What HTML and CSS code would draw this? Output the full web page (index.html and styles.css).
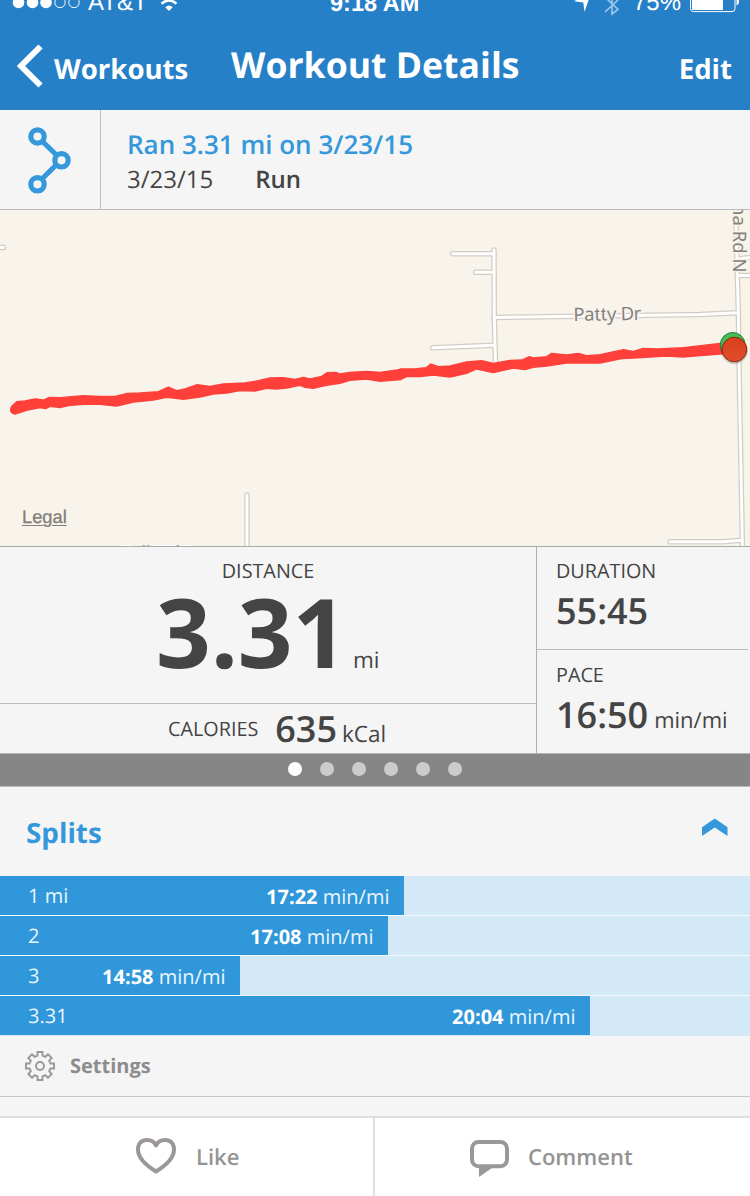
FILE: index.html
```html
<!DOCTYPE html>
<html lang="en">
<head>
<meta charset="utf-8">
<title>Workout Details</title>
<link rel="stylesheet" href="styles.css">
</head>
<body>
<div class="app">
  <header class="header">
    <div class="status">
      <div class="status-left">
        <svg class="signal" width="68" height="9" viewBox="0 0 68 9">
          <g fill="#fff"><circle cx="6.500" cy="2.500" r="5.800"/><circle cx="20.500" cy="2.500" r="5.800"/><circle cx="34" cy="2.500" r="5.800"/></g>
          <g fill="none" stroke="#fff" stroke-width="1"><circle cx="48" cy="2.500" r="5.200"/><circle cx="62" cy="2.500" r="5.200"/></g>
        </svg>
        <span class="carrier">AT&amp;T</span>
        <svg class="wifi" width="18" height="12" viewBox="0 0 18 12">
          <path d="M9 11 L5.300 7.200 Q9 3.800 12.700 7.200 Z" fill="#fff"/>
          <path d="M1.500 3.800 Q9 -2.800 16.500 3.800" fill="none" stroke="#fff" stroke-width="2.600"/>
        </svg>
      </div>
      <span class="clock">9:18 AM</span>
      <div class="status-right">
        <svg class="locate" width="17" height="12" viewBox="0 0 17 12"><path d="M0 1.200 L17 -7 L10.500 12 L9.300 2.400 Z" fill="#fff"/></svg>
        <svg class="bluetooth" width="16" height="16" viewBox="0 0 16 16"><path d="M1 -3 L14 9.500 L8 14 V-8 M1 12 L14 0" fill="none" stroke="#9cc5ea" stroke-width="1.700"/></svg>
        <span class="percent">75%</span>
        <svg class="battery" width="50" height="13" viewBox="0 0 50 13">
          <rect x=".5" y="-10" width="44.500" height="21.600" rx="3" fill="none" stroke="#fff"/>
          <rect x="2" y="-8" width="31" height="18" rx="1" fill="#fff"/>
          <path d="M46.500 -3 Q49 -2 49 1 Q49 4.500 46.500 5.500 Z" fill="#fff"/>
        </svg>
      </div>
    </div>
    <nav class="nav">
      <svg class="back-icon" width="26" height="44" viewBox="0 0 26 44"><path d="M23.500 2.500 L4 22 L23.500 41.500" fill="none" stroke="#fff" stroke-width="6"/></svg>
      <span class="back">Workouts</span>
      <h1 class="title">Workout Details</h1>
      <span class="edit">Edit</span>
    </nav>
  </header>

  <section class="activity">
    <div class="activity-icon">
      <svg width="44" height="68" viewBox="0 0 44 68">
        <g fill="none" stroke="#3498db" stroke-width="5.200">
          <path d="M14.500 15.500 L28.500 29 M28.500 38.500 L14.500 52.500"/>
          <circle cx="9.500" cy="10.500" r="6.700"/><circle cx="33.500" cy="34.300" r="6.700"/><circle cx="9.500" cy="58.300" r="6.700"/>
        </g>
      </svg>
    </div>
    <div class="activity-text">
      <div class="activity-title">Ran 3.31 mi on 3/23/15</div>
      <div class="activity-meta"><span class="date">3/23/15</span><span class="kind">Run</span></div>
    </div>
  </section>

  <section class="map">
    <svg class="map-canvas" width="750" height="336" viewBox="0 0 750 336">
      <path d="M736 0 L738 102 L743 336 H750 V0 Z" fill="#faf4e8"/>
      <defs>
        <g id="roads" fill="none" stroke-linecap="round">
          <path d="M735.500 -5 L737.300 65 L738.300 102 L739.500 180 L742.500 340"/>
          <path d="M494 40 L494.300 107 L495.500 152"/>
          <path d="M452.500 43.700 H494 M475.500 62.300 H494 M432.500 137.700 L495 135.300 M494 107.500 L700 104.500 L738 102.700"/>
          <path d="M737.500 65.500 H755 M737.500 49 L755 47"/>
          <path d="M670 331.800 H723 L742 330.300"/>
          <path d="M-5 37.500 H3.500 M247 285 V340"/>
        </g>
      </defs>
      <use href="#roads" stroke="#d0cdc8" stroke-width="5.400"/>
      <use href="#roads" stroke="#fffefc" stroke-width="2.900"/>
      <path d="M122 335.500 H132 M152 335.500 H176 M181 335.500 H190" stroke="#fff"/>
      <path d="M142.500 335.500 H145 M147 335.500 H149.500 M176.500 335.500 H179" stroke="#aaa6a0"/>
      <g class="road-label">
        <text x="573.500" y="111" transform="rotate(-1 574 111)" textLength="68">Patty Dr</text>
        <text x="62.500" y="-732.500" transform="rotate(90)" text-anchor="end">ha Rd N</text>
      </g>
      <g fill="#ff403a" stroke="#ff403a" stroke-width="4" stroke-linejoin="round">
        <path transform="translate(0 130) scale(.33333)" d="M34 200 L50 185 L75 183 L105 177 L130 180 L148 172 L180 173 L250 167 L300 169 L345 169 L382 160 L420 159 L475 155 L505 141 L530 152 L555 147 L592 134 L630 139 L670 132 L735 129 L775 122 L810 114 L850 113 L885 118 L910 112 L930 117 L965 109 L982 98 L1008 97 L1020 102 L1050 97 L1100 94 L1140 97 L1203 88 V119 L1140 124 L1100 117 L1050 121 L1020 130 L975 137 L940 145 L915 142 L900 136 L860 144 L830 147 L800 145 L765 153 L720 152 L680 159 L640 162 L600 171 L550 178 L520 174 L500 172 L460 180 L400 186 L350 198 L300 193 L250 193 L205 197 L180 203 L150 199 L137 206 L120 203 L80 211 L45 222 Q31 221 32 208 Z"/>
        <path transform="translate(400 -10) scale(.33333)" d="M0 507 L50 506 L78 503 L92 492 L115 500 L150 498 L200 486 L245 482 L280 490 L330 481 L365 480 L388 470 L400 474 L440 470 L455 460 L500 465 L535 460 L560 467 L600 464 L670 449 L700 454 L730 445 L770 447 L850 443 L980 428 V461 L900 467 L850 471 L800 468 L700 474 L665 476 L600 489 L500 489 L440 498 L400 502 L375 509 L340 504 L280 518 L230 507 L200 520 L150 531 L100 525 L60 530 L20 530 L0 539 Z"/>
      </g>
      <defs>
        <linearGradient id="finish" x1="0" y1="0" x2="0" y2="1"><stop offset="0" stop-color="#d9401e"/><stop offset="1" stop-color="#e04d2a"/></linearGradient>
      </defs>
      <circle cx="733" cy="136" r="13.200" fill="#000" opacity=".12"/>
      <circle cx="732.700" cy="134.800" r="12.300" fill="#43bf55" stroke="#25773a"/>
      <circle cx="734.500" cy="140.700" r="13.300" fill="#000" opacity=".2"/>
      <circle cx="734.400" cy="139.500" r="12.300" fill="url(#finish)" stroke="#8c2a12"/>
    </svg>
    <a class="legal">Legal</a>
  </section>

  <section class="stats">
    <div class="stats-main">
      <div class="distance">
        <div class="label">DISTANCE</div>
        <div class="distance-row"><span class="distance-value">3.31</span><span class="unit">mi</span></div>
      </div>
      <div class="calories">
        <span class="label">CALORIES</span><span class="value">635</span><span class="unit">kCal</span>
      </div>
    </div>
    <div class="stats-side">
      <div class="duration"><div class="label">DURATION</div><div class="value">55:45</div></div>
      <div class="pace"><div class="label">PACE</div><div class="pace-row"><span class="value">16:50</span><span class="unit">min/mi</span></div></div>
    </div>
  </section>

  <div class="pager"><i class="dot active"></i><i class="dot"></i><i class="dot"></i><i class="dot"></i><i class="dot"></i><i class="dot"></i></div>

  <section class="splits">
    <div class="splits-head">
      <h2 class="splits-title">Splits</h2>
      <svg class="collapse" width="26" height="18" viewBox="0 0 26 18"><path d="M0 9.300 L12.800 .5 L25.500 9.300 V18 L12.800 9.500 L0 18 Z" fill="#3498db"/></svg>
    </div>
    <div class="split"><div class="bar" style="width:404px"><span class="mile">1 mi</span><span class="rate"><b>17:22</b> min/mi</span></div></div>
    <div class="split"><div class="bar" style="width:388px"><span class="mile">2</span><span class="rate"><b>17:08</b> min/mi</span></div></div>
    <div class="split"><div class="bar" style="width:240px"><span class="mile">3</span><span class="rate"><b>14:58</b> min/mi</span></div></div>
    <div class="split last"><div class="bar" style="width:590px"><span class="mile">3.31</span><span class="rate"><b>20:04</b> min/mi</span></div></div>
    <div class="settings">
      <svg class="gear" width="30" height="30" viewBox="0 0 30 30">
        <path d="M12.500 1 H17.500 V4.600 L20.400 5.800 L23 3.300 L26.700 7 L24.200 9.600 L25.400 12.500 H29 V17.500 H25.400 L24.200 20.400 L26.700 23 L23 26.700 L20.400 24.200 L17.500 25.400 V29 H12.500 V25.400 L9.600 24.200 L7 26.700 L3.300 23 L5.800 20.400 L4.600 17.500 H1 V12.500 H4.600 L5.800 9.600 L3.300 7 L7 3.300 L9.600 5.800 L12.500 4.600 Z" fill="none" stroke="#999" stroke-width="1.900"/>
        <circle cx="15" cy="15" r="4" fill="none" stroke="#999" stroke-width="1.900"/>
      </svg>
      <span class="settings-text">Settings</span>
    </div>
  </section>

  <footer class="footer">
    <div class="action like">
      <svg class="heart" width="42" height="38" viewBox="0 0 42 38"><path d="M21 34.500 C12 29 3 21 3 12.500 C3 6 7 3 12 3 C16 3 19.500 5 21 8.500 C22.500 5 26 3 30 3 C35 3 39 6 39 12.500 C39 21 30 29 21 34.500 Z" fill="none" stroke="#9b9797" stroke-width="4" stroke-linejoin="round"/></svg>
      <span class="action-text">Like</span>
    </div>
    <div class="action comment">
      <svg class="bubble" width="40" height="38" viewBox="0 0 40 38"><rect x="2" y="2" width="35" height="24.200" rx="6.500" fill="none" stroke="#999" stroke-width="4"/><path d="M9 28 H22 L9 37 Z" fill="#999"/></svg>
      <span class="action-text comment-text">Comment</span>
    </div>
  </footer>
</div>
</body>
</html>
```
FILE: styles.css
```css
* { box-sizing: border-box; }
body { margin: 0; font-family: "Open Sans", "Noto Sans", sans-serif; color: #444; background: #f5f5f5; text-rendering: geometricPrecision; }
h1, h2 { margin: 0; }
svg { display: block; flex: none; }
span, .label, .value { white-space: nowrap; }
.app { width: 750px; height: 1196px; overflow: hidden; display: flex; flex-direction: column; }

.header { height: 110px; background: #2680c8; color: #fff; }
.status { height: 20px; display: grid; grid-template-columns: 330px 1fr 176px; overflow: hidden; font-family: "Liberation Sans", Arial, sans-serif; font-size: 24px; line-height: 24px; }
.status-left, .status-right { display: flex; align-items: flex-start; }
.status-left { padding-left: 12px; }
.carrier, .clock, .percent { margin-top: -9px; }
.carrier { margin-left: 8px; }
.clock { font-weight: bold; font-size: 23.5px; }
.wifi { margin-left: 12px; }
.bluetooth { margin-left: 13px; }
.percent { margin-left: 13px; }
.battery { margin-left: 9px; }

.nav { height: 90px; display: flex; align-items: flex-start; padding: 20px 18px 0 17px; line-height: 50px; }
.back-icon { margin-top: 4px; }
.back { width: 135px; margin-left: 11px; padding-top: 4px; font-size: 27.6px; font-weight: 700; }
.title { margin-left: 42px; font-size: 35.6px; font-weight: 700; }
.edit { margin-left: auto; padding-top: 4px; font-size: 27.6px; font-weight: 700; }

.activity { height: 100px; display: flex; border-bottom: 1px solid #bbb; }
.activity-icon { width: 101px; border-right: 1px solid #bbb; padding: 16px 0 0 28px; }
.activity-text { padding: 17px 0 0 26px; }
.activity-title { font-size: 26px; line-height: 35px; font-weight: 600; color: #3498db; }
.activity-meta { font-size: 24px; line-height: 36px; display: flex; }
.kind { margin-left: 42px; font-weight: 600; }

.map { height: 337px; position: relative; background: #f8f4ec; border-bottom: 1px solid #aaa; }
.road-label { font-family: "Noto Sans", sans-serif; font-size: 18.5px; fill: #85827e; stroke: #f8f4ec; stroke-width: 3px; paint-order: stroke; }
.legal { position: absolute; left: 22px; top: 296px; font: 18.3px/22px "Liberation Sans", Arial, sans-serif; color: #827f7a; -webkit-text-stroke: .3px #827f7a; text-decoration: underline; text-decoration-thickness: 1px; text-underline-offset: 2px; }

.stats { height: 207px; display: grid; grid-template-columns: 537px 1fr; border-bottom: 1px solid #b5b5b5; }
.stats-main { border-right: 1px solid #b0b0b0; }
.label { font-size: 19.8px; line-height: 28px; }
.unit { font-size: 22.5px; }
.value { font-size: 36px; font-weight: 600; }
.distance { height: 157px; border-bottom: 1px solid #bbb; padding-top: 10px; }
.distance .label { text-align: center; }
.distance-row { display: flex; align-items: baseline; padding-left: 156px; line-height: 90px; margin-top: 2px; }
.distance-value { width: 185px; font-size: 96px; font-weight: 700; letter-spacing: -.2px; }
.distance .unit { margin-left: 12px; }
.calories { display: flex; padding-left: 168px; line-height: 49px; }
.calories .label { line-height: 49px; }
.calories .value { margin-left: 17px; }
.calories .unit { margin-left: 5px; padding-top: 5px; }
.duration { height: 103px; margin-right: 2px; padding: 10px 0 0 19px; border-bottom: 1px solid #bbb; }
.stats-side .value { line-height: 52px; }
.pace { padding: 11px 0 0 19px; }
.pace-row { display: flex; align-items: baseline; }
.pace .unit { margin-left: 6px; font-size: 22px; }

.pager { height: 33px; background: #868686; border-bottom: 1px solid #bbb; display: flex; align-items: flex-start; justify-content: center; gap: 18px; padding-top: 8px; }
.dot { width: 14px; height: 14px; border-radius: 50%; background: #ccc; }
.dot.active { background: #fff; }

.splits-head { height: 89px; display: flex; justify-content: space-between; padding: 26px 22px 0 26px; }
.splits-title { font-size: 27.8px; line-height: 40px; font-weight: 700; color: #3498db; }
.collapse { margin-top: 5px; }
.split { height: 40px; background: #d4e9f7; border-bottom: 1px solid #f4faff; }
.split.last { border-bottom-color: #d4e9f7; }
.bar { height: 39px; background: #2f97da; color: #fff; display: flex; justify-content: space-between; padding: 0 14.5px 0 28px; font-size: 20px; line-height: 39px; }
.mile { color: #eaf6ff; }
.rate { padding-top: 1px; color: #eaf6ff; }
.rate b { color: #fff; }
.settings { height: 61px; border-bottom: 1px solid #c6c6c6; display: flex; padding: 15px 0 0 25px; }
.settings-text { margin-left: 15px; font-size: 20px; line-height: 30px; font-weight: 700; color: #8c8c8c; }

.footer { margin-top: 19px; height: 80px; border-top: 2px solid #e0e0e0; background: #fff; display: grid; grid-template-columns: 375px 1fr; }
.action { display: flex; font-size: 22px; line-height: 30px; font-weight: 600; color: #949494; }
.like { border-right: 2px solid #e0e0e0; padding-left: 135px; }
.comment { padding-left: 95px; }
.heart { margin-top: 19px; }
.bubble { margin-top: 22px; }
.action-text { margin: 24px 0 0 19px; }
.comment-text { margin-left: 18px; }
```
